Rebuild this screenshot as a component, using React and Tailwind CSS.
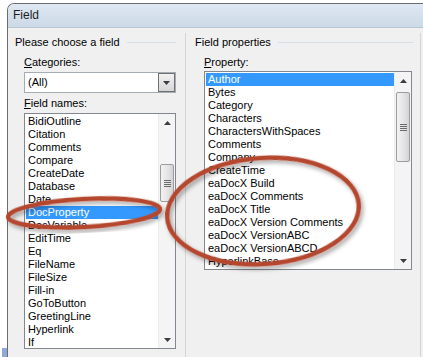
import React from "react";

const fieldNames = [
  "BidiOutline",
  "Citation",
  "Comments",
  "Compare",
  "CreateDate",
  "Database",
  "Date",
  "DocProperty",
  "DocVariable",
  "EditTime",
  "Eq",
  "FileName",
  "FileSize",
  "Fill-in",
  "GoToButton",
  "GreetingLine",
  "Hyperlink",
  "If",
];

const properties = [
  "Author",
  "Bytes",
  "Category",
  "Characters",
  "CharactersWithSpaces",
  "Comments",
  "Company",
  "CreateTime",
  "eaDocX Build",
  "eaDocX Comments",
  "eaDocX Title",
  "eaDocX Version Comments",
  "eaDocX VersionABC",
  "eaDocX VersionABCD",
  "HyperlinkBase",
];

const UpArrow = () => (
  <svg width="7" height="4" viewBox="0 0 7 4">
    <path d="M0 4 L3.5 0 L7 4 Z" fill="#3c3c3c" />
  </svg>
);

const DownArrow = () => (
  <svg width="7" height="4" viewBox="0 0 7 4">
    <path d="M0 0 L7 0 L3.5 4 Z" fill="#3c3c3c" />
  </svg>
);

// scrollbar with arrows and a thumb
const ScrollBar = ({ thumbTop, thumbHeight }) => (
  <div className="flex flex-col w-[17px] h-full bg-[#f4f4f4] border-l border-[#ececec]">
    <div className="h-[17px] flex items-center justify-center">
      <UpArrow />
    </div>
    <div className="flex-1 relative">
      <div
        className="absolute left-[1px] right-[1px] rounded-[2px] border border-[#9c9c9c] bg-gradient-to-r from-[#f2f2f2] via-[#e6e6e6] to-[#d4d4d4] flex items-center justify-center"
        style={{ top: thumbTop, height: thumbHeight }}
      >
        <div className="flex flex-col gap-[1px]">
          <div className="w-[7px] h-[1px] bg-[#6a6a6a]" />
          <div className="w-[7px] h-[1px] bg-[#6a6a6a]" />
          <div className="w-[7px] h-[1px] bg-[#6a6a6a]" />
          <div className="w-[7px] h-[1px] bg-[#6a6a6a]" />
        </div>
      </div>
    </div>
    <div className="h-[17px] flex items-center justify-center">
      <DownArrow />
    </div>
  </div>
);

const ListBox = ({ items, selected, className, thumbTop, thumbHeight }) => (
  <div className={`flex border border-[#828790] bg-white overflow-hidden ${className}`}>
    <div className="flex-1 pt-[1px] pl-[1px] overflow-hidden">
      {items.map((item, i) => (
        <div
          key={item}
          className={`h-[13px] leading-[13px] pl-[2px] whitespace-nowrap ${
            i === selected ? "bg-[#3399ff] text-white" : "text-black"
          }`}
        >
          {item}
        </div>
      ))}
    </div>
    <ScrollBar thumbTop={thumbTop} thumbHeight={thumbHeight} />
  </div>
);

const GroupTitle = ({ children }) => (
  <div className="flex items-center gap-[7px] h-[13px]">
    <span className="whitespace-nowrap">{children}</span>
    <div className="flex-1 h-[1px] bg-[#d5dfe5]" />
  </div>
);

export default function App() {
  return (
    <div className="relative w-[423px] h-[357px] bg-white overflow-hidden font-['Liberation_Sans',Tahoma,sans-serif] text-[11px] leading-[13px] text-black">
      <div className="ml-[7px] mt-[3px] w-[430px] h-[360px] border-l border-t border-[#6d6d6d] rounded-tl-[7px] overflow-hidden bg-[#f0f0f0] flex flex-col">
        {/* Title bar */}
        <div className="h-[24px] bg-gradient-to-b from-[#dfe8f2] to-[#ccd9e7] border-b border-[#b9c6d3] flex items-center pl-[5px] text-[12px] text-[#1e1e1e]">
          Field
        </div>

        <div className="flex flex-1">
          {/* Left group */}
          <div className="w-[177px] pt-[8px] pl-[7px] pr-[9px]">
            <GroupTitle>Please choose a field</GroupTitle>
            <div className="pl-[9px] mt-[7px]">
              <div className="h-[13px]">
                <span className="underline">C</span>ategories:
              </div>
              <div className="mt-[3px] w-[152px] h-[21px] border border-[#a5acb5] bg-white flex items-center">
                <div className="flex-1 pl-[3px]">(All)</div>
                <div className="w-[17px] h-[19px] border border-[#707070] bg-gradient-to-b from-[#f2f2f2] to-[#d6d6d6] flex items-center justify-center">
                  <DownArrow />
                </div>
              </div>
              <div className="mt-[4px] h-[13px]">
                <span className="underline">F</span>ield names:
              </div>
              <ListBox
                items={fieldNames}
                selected={7}
                className="mt-[3px] w-[152px] h-[236px]"
                thumbTop={33}
                thumbHeight={38}
              />
            </div>
          </div>

          {/* separator */}
          <div className="w-[1px] mt-[5px] bg-[#d5d5d5]" />

          {/* Right group */}
          <div className="w-[235px] pt-[8px] pl-[9px] flex">
            <div className="w-[225px]">
              <div className="w-[218px]">
                <GroupTitle>Field properties</GroupTitle>
              </div>
              <div className="pl-[9px] mt-[7px]">
                <div className="h-[13px]">
                  <span className="underline">P</span>roperty:
                </div>
                <ListBox
                  items={properties}
                  selected={0}
                  className="mt-[2px] w-[208px] h-[199px]"
                  thumbTop={3}
                  thumbHeight={70}
                />
              </div>
            </div>
            <div className="w-[1px] -mt-[3px] bg-[#d5d5d5]" />
          </div>
        </div>
      </div>

      {/* small blue mark at lower left */}
      <div className="absolute left-[2px] top-[348px] w-[5px] h-[9px] bg-[#8fa8d8]" />

      {/* annotation ellipses */}
      <svg className="absolute inset-0 pointer-events-none" width="423" height="357">
        <defs>
          <filter id="sh" x="-20%" y="-20%" width="140%" height="140%">
            <feDropShadow dx="2" dy="3" stdDeviation="2" floodColor="#000" floodOpacity="0.35" />
          </filter>
        </defs>
        <ellipse
          cx="84"
          cy="213"
          rx="76"
          ry="14"
          transform="rotate(-3 84 213)"
          fill="none"
          stroke="#b5472f"
          strokeWidth="4.5"
          filter="url(#sh)"
        />
        <ellipse
          cx="263"
          cy="211"
          rx="96"
          ry="53"
          transform="rotate(-4 263 211)"
          fill="none"
          stroke="#b5472f"
          strokeWidth="4.5"
          filter="url(#sh)"
        />
      </svg>
    </div>
  );
}
